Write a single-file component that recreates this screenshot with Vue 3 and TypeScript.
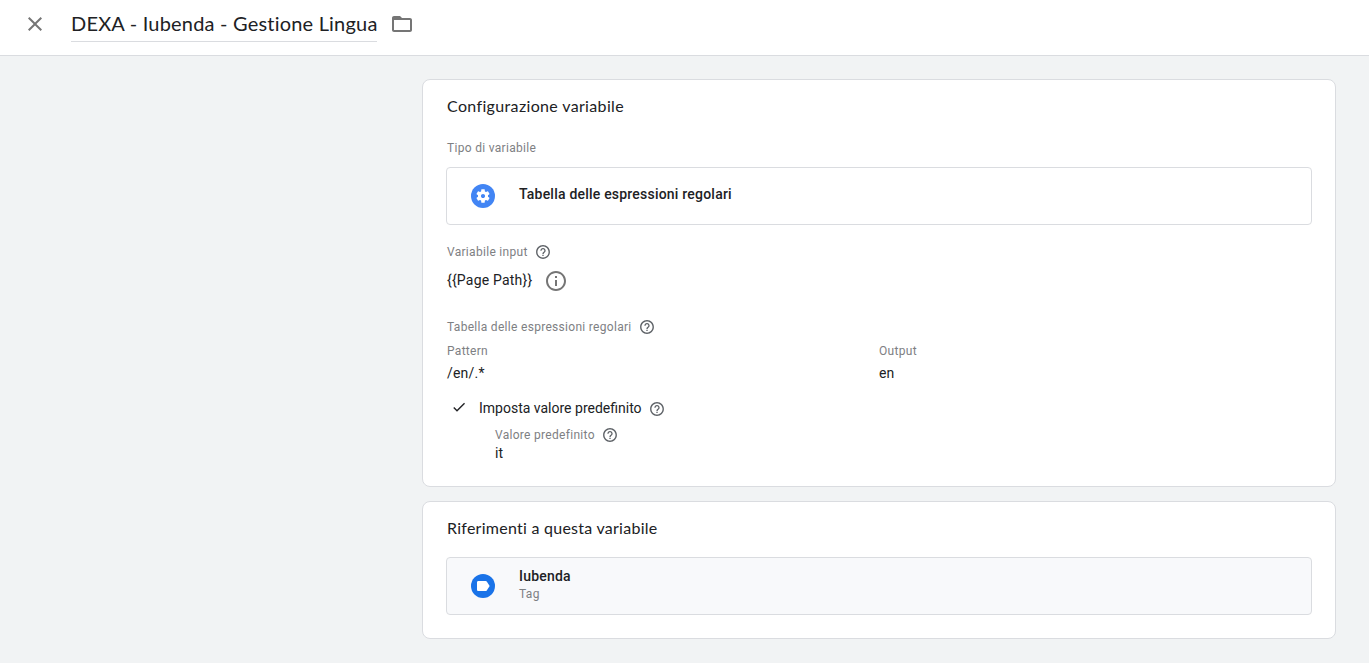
<script setup lang="ts">
import { h, type FunctionalComponent } from 'vue'

const paths = {
  help: 'M11 18h2v-2h-2v2zm1-16.4C6.26 1.6 1.6 6.26 1.6 12S6.26 22.4 12 22.4 22.4 17.74 22.4 12 17.74 1.6 12 1.6zm0 18.7c-4.58 0-8.3-3.72-8.3-8.3S7.42 3.7 12 3.7s8.3 3.72 8.3 8.3-3.72 8.3-8.3 8.3zM12 6c-2.21 0-4 1.79-4 4h2c0-1.1.9-2 2-2s2 .9 2 2c0 2-3 1.75-3 5h2c0-2.25 3-2.5 3-5 0-2.21-1.79-4-4-4z',
  info: 'M11 17h2v-6h-2v6zm1-15C6.48 2 2 6.48 2 12s4.48 10 10 10 10-4.48 10-10S17.52 2 12 2zm0 18c-4.41 0-8-3.59-8-8s3.59-8 8-8 8 3.59 8 8-3.59 8-8 8zM11 9h2V7h-2v2z',
  close: 'M19 6.41L17.59 5 12 10.59 6.41 5 5 6.41 10.59 12 5 17.59 6.41 19 12 13.41 17.59 19 19 17.59 13.41 12z',
  folder: 'M20 6h-8l-2-2H4c-1.1 0-1.99.9-1.99 2L2 18c0 1.1.9 2 2 2h16c1.1 0 2-.9 2-2V8c0-1.1-.9-2-2-2zm0 12H4V8h16v10z',
  check: 'M9 16.17L4.83 12l-1.42 1.41L9 19 21 7l-1.41-1.41z',
  gear: 'M19.43 12.98c.04-.32.07-.64.07-.98s-.03-.66-.07-.98l2.11-1.65c.19-.15.24-.42.12-.64l-2-3.46c-.12-.22-.39-.3-.61-.22l-2.49 1c-.52-.4-1.08-.73-1.69-.98l-.38-2.65C14.46 2.18 14.25 2 14 2h-4c-.25 0-.46.18-.49.42l-.38 2.65c-.61.25-1.17.59-1.69.98l-2.49-1c-.23-.09-.49 0-.61.22l-2 3.46c-.13.22-.07.49.12.64l2.11 1.65c-.04.32-.07.65-.07.98s.03.66.07.98l-2.11 1.65c-.19.15-.24.42-.12.64l2 3.46c.12.22.39.3.61.22l2.49-1c.52.4 1.08.73 1.69.98l.38 2.65c.03.24.24.42.49.42h4c.25 0 .46-.18.49-.42l.38-2.65c.61-.25 1.17-.59 1.69-.98l2.49 1c.23.09.49 0 .61-.22l2-3.46c.12-.22.07-.49-.12-.64l-2.11-1.65zM12 15.1c-1.71 0-3.1-1.39-3.1-3.1s1.39-3.1 3.1-3.1 3.1 1.39 3.1 3.1-1.39 3.1-3.1 3.1z',
  tag: 'M17.63 5.34C17.27 4.83 16.67 4.5 16 4.5H5C3.9 4.5 3 5.4 3 6.5v11c0 1.1.9 2 2 2h11c.67 0 1.27-.33 1.63-.84L22 12l-4.37-6.66z',
}

const Icon: FunctionalComponent<{ name: keyof typeof paths; size: number }> = (p) =>
  h('svg', { viewBox: '0 0 24 24', width: p.size, height: p.size, fill: 'currentColor' }, [
    h('path', { d: paths[p.name] }),
  ])
Icon.props = ['name', 'size']
</script>

<template>
  <div class="page">
    <header class="bar">
      <Icon class="close" name="close" :size="24" />
      <div class="title"><span>DEXA - Iubenda - Gestione Lingua</span></div>
      <Icon class="folder" name="folder" :size="24" />
    </header>
    <main class="content">
      <section class="card config">
        <h2 class="h-config">Configurazione variabile</h2>
        <div class="label type-label"><span>Tipo di variabile</span></div>
        <div class="box">
          <div class="badge gear"><Icon name="gear" :size="16" /></div>
          <div class="strong type-name">Tabella delle espressioni regolari</div>
        </div>
        <div class="label input-label"><span>Variabile input</span><Icon class="help" name="help" :size="16" /></div>
        <div class="value input-value"><span>{{ '\{\{Page Path\}\}' }}</span><Icon class="info" name="info" :size="24" /></div>
        <div class="label table-label"><span>Tabella delle espressioni regolari</span><Icon class="help" name="help" :size="16" /></div>
        <div class="table">
          <div class="label">Pattern</div>
          <div class="label">Output</div>
          <div class="value pattern">/en/.*</div>
          <div class="value">en</div>
        </div>
        <div class="value default-row"><Icon class="check" name="check" :size="16" /><span>Imposta valore predefinito</span><Icon class="help" name="help" :size="16" /></div>
        <div class="label default-label"><span>Valore predefinito</span><Icon class="help" name="help" :size="16" /></div>
        <div class="value default-value">it</div>
      </section>
      <section class="card refs">
        <h2 class="h-refs">Riferimenti a questa variabile</h2>
        <div class="box ref">
          <div class="badge tag"><Icon name="tag" :size="16" /></div>
          <div>
            <div class="strong">Iubenda</div>
            <div class="label sub">Tag</div>
          </div>
        </div>
      </section>
    </main>
  </div>
</template>

<style>
body { margin: 0; background: #f1f3f4; }
</style>

<style scoped>
.page { height: 663px; overflow: hidden; background: #f1f3f4; font-family: Roboto, "Liberation Sans", sans-serif; color: #202124; }
.page * { box-sizing: border-box; }
svg { display: block; flex: none; }
.bar { display: flex; height: 56px; padding-left: 23px; background: #fff; border-bottom: 1px solid #dadce0; }
.close { margin-top: 12px; color: #757575; }
.title { width: 306px; height: 42px; margin-left: 24px; border-bottom: 1px solid #dadce0; font: 400 20px/46px Lato, sans-serif; letter-spacing: 0.2px; white-space: nowrap; }
.folder { margin: 12px 0 0 12.5px; color: #757575; }
.content { display: flex; flex-direction: column; gap: 14px; width: 914px; margin: 23px 0 0 422px; }
.card { background: #fff; border: 1px solid #dadce0; border-radius: 8px; padding: 0 23px; }
.config { height: 408px; }
.refs { height: 138px; }
h2 { margin: 14px 0 0 1px; font: 400 16px/24px Lato, sans-serif; letter-spacing: 0.35px; white-space: nowrap; }
.h-refs { letter-spacing: 0.26px; }
.label { display: flex; align-items: center; height: 16px; padding-left: 1px; font-size: 12px; line-height: 16px; letter-spacing: 0.3px; color: #80868b; color: #7e8083; white-space: nowrap; }
.value { display: flex; align-items: center; height: 20px; padding-left: 1px; font-size: 14px; line-height: 20px; white-space: nowrap; }
.strong { font-size: 14px; font-weight: 500; line-height: 20px; letter-spacing: 0.21px; white-space: nowrap; }
.help { margin-left: 7px; color: #5f6368; }
.type-label { margin-top: 22px; }
.box { display: flex; height: 58px; margin-top: 11px; padding-left: 24px; border: 1px solid #dadce0; border-radius: 4px; }
.badge { display: flex; flex: none; align-items: center; justify-content: center; width: 24px; height: 24px; margin: 16px 24px 0 0; border-radius: 50%; color: #fff; }
.gear { background: #4285f4; }
.tag { background: #1a73e8; }
.type-name { margin-top: 16px; }
.input-label { margin-top: 19px; }
.input-value { margin-top: 10px; letter-spacing: 0.2px; }
.info { margin: 2px 0 0 12px; color: #757575; }
.table-label { margin-top: 29px; }
.table { display: grid; grid-template-columns: 432px 1fr; row-gap: 4px; margin-top: 8px; }
.pattern { letter-spacing: 0.2px; }
.default-row { margin-top: 15px; padding-left: 5px; }
.default-row .help { margin-top: 2px; }
.check { margin: -2px 12px 0 0; }
.default-label { margin: 9px 0 0 48px; }
.default-value { margin: 0 0 0 48px; }
.ref { margin-top: 17px; background: #f8f9fb; }
.ref .strong { margin-top: 8px; }
.sub { padding: 0; }
</style>
